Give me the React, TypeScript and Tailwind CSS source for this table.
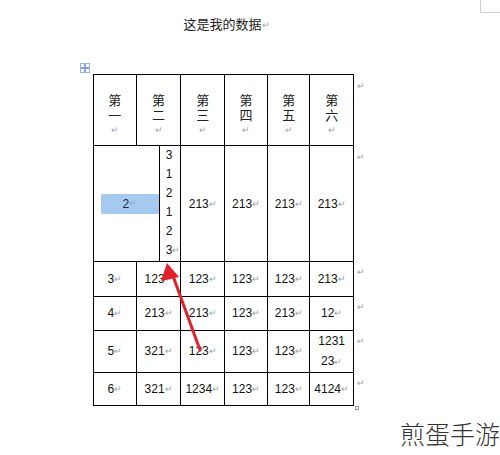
import React from "react";

const cjk = "font-['Noto_Sans_CJK_SC',sans-serif]";
const num = "font-['Liberation_Sans','Noto_Sans_CJK_SC',sans-serif]";

function Mark() {
    return <span className="text-[9px] text-gray-400 align-middle">↵</span>
}

function Cell({ children, span = 2 }: { children: React.ReactNode, span?: number }) {
    return (
        <td colSpan={span} className="border border-black text-center align-middle p-0 text-[12px] text-[#111]">
            {children}
        </td>
    )
}

// vertical header text, one char per line like Word's stacked direction
function Stack({ ch }: { ch: string }) {
    return (
        <div className={`pt-[6px] text-center text-[#222] ${cjk}`}>
            <p className="text-[13px] leading-[15px]">第<br />{ch}</p>
            <p className="mt-[3px] text-[9px] leading-[10px] text-gray-400">↵</p>
        </div>
    )
}

function Head({ ch }: { ch: string }) {
    return (
        <td className="border border-black p-0 align-middle">
            <Stack ch={ch} />
        </td>
    )
}

function End() {
    return <td className="align-top pl-[3px] pt-[3px] leading-none"><Mark /></td>
}

const rows = [
    { h: "h-[35px]", v: ["3", "123", "123", "123", "123", "213"] },
    { h: "h-[34px]", v: ["4", "213", "213", "123", "213", "12"] },
    { h: "h-[41px]", v: ["5", "321", "123", "123", "123", "1231 23"] },
    { h: "h-[33px]", v: ["6", "321", "1234", "123", "123", "4124"] },
]

export default function App() {
    return (
        <div className="relative w-[500px] h-[455px] bg-white overflow-hidden">
            <div className="absolute top-0 right-0 w-[20px] h-[13px] border-l border-b border-[#cfcfcf]"></div>

            <div className="ml-[93px] w-[272px] pt-[15px]">
                <p className={`text-center pr-[5px] text-[13px] leading-[18px] text-[#222] ${cjk}`}>
                    这是我的数据<Mark />
                </p>

                <div className="relative mt-[40px]">
                    <div className="absolute -left-[13px] -top-[11px] w-[10px] h-[10px] border border-[#9bb3d4] bg-white flex items-center justify-center">
                        <svg width="8" height="8" viewBox="0 0 8 8" fill="none" stroke="#3a6fc4" strokeWidth="1">
                            <path d="M4 0.5v7M0.5 4h7" />
                            <path d="M3 1.5l1-1 1 1M3 6.5l1 1 1-1M1.5 3l-1 1 1 1M6.5 3l1 1-1 1" />
                        </svg>
                    </div>

                    <table className={`table-fixed border-collapse ${num}`}>
                        <colgroup>
                            <col className="w-[44px]" />
                            <col className="w-[24px]" />
                            <col className="w-[19px]" />
                            <col className="w-[44px]" />
                            <col className="w-[44px]" />
                            <col className="w-[43px]" />
                            <col className="w-[44px]" />
                            <col className="w-[10px]" />
                        </colgroup>
                        <tbody>
                            <tr className="h-[71px]">
                                <Head ch="一" />
                                <td colSpan={2} className="border border-black p-0 align-middle">
                                    <Stack ch="二" />
                                </td>
                                <Head ch="三" />
                                <Head ch="四" />
                                <Head ch="五" />
                                <Head ch="六" />
                                <End />
                            </tr>
                            <tr className="h-[115px]">
                                <td colSpan={2} className="border border-black p-0 align-middle">
                                    <div className="ml-[7px] h-[20px] bg-[#a6c9ef] flex items-center justify-center text-[12px] text-[#1a2a44]">
                                        2<Mark />
                                    </div>
                                </td>
                                <td className="border border-black p-0 align-top">
                                    <p className="pl-[6px] text-[12px] leading-[19px] text-[#111]">
                                        3<br />1<br />2<br />1<br />2<br />3<Mark />
                                    </p>
                                </td>
                                <Cell span={1}>213<Mark /></Cell>
                                <Cell span={1}>213<Mark /></Cell>
                                <Cell span={1}>213<Mark /></Cell>
                                <Cell span={1}>213<Mark /></Cell>
                                <End />
                            </tr>
                            {rows.map((r) => (
                                <tr key={r.v[0]} className={r.h}>
                                    {r.v.map((v, i) => (
                                        <Cell key={i} span={i === 1 ? 2 : 1}>
                                            {v.includes(" ") ? (
                                                <div className="leading-[20px]">
                                                    {v.split(" ")[0]}<br />{v.split(" ")[1]}<Mark />
                                                </div>
                                            ) : (
                                                <>{v}<Mark /></>
                                            )}
                                        </Cell>
                                    ))}
                                    <End />
                                </tr>
                            ))}
                        </tbody>
                    </table>

                    <div className="absolute left-[262px] top-[332px] w-[4px] h-[4px] border border-[#999]"></div>

                    <svg className="absolute left-0 top-0 pointer-events-none" width="272" height="340" viewBox="0 0 272 340">
                        <line x1="107" y1="276" x2="80" y2="202" stroke="#e0222b" strokeWidth="3" strokeLinecap="round" />
                        <polygon points="74,189 68,207 86,203" fill="#e0222b" />
                    </svg>
                </div>
            </div>

            <div className={`absolute right-0 bottom-[8px] text-[25px] leading-[28px] font-light text-[#333] ${cjk}`}>
                煎蛋手游
            </div>
        </div>
    )
}
